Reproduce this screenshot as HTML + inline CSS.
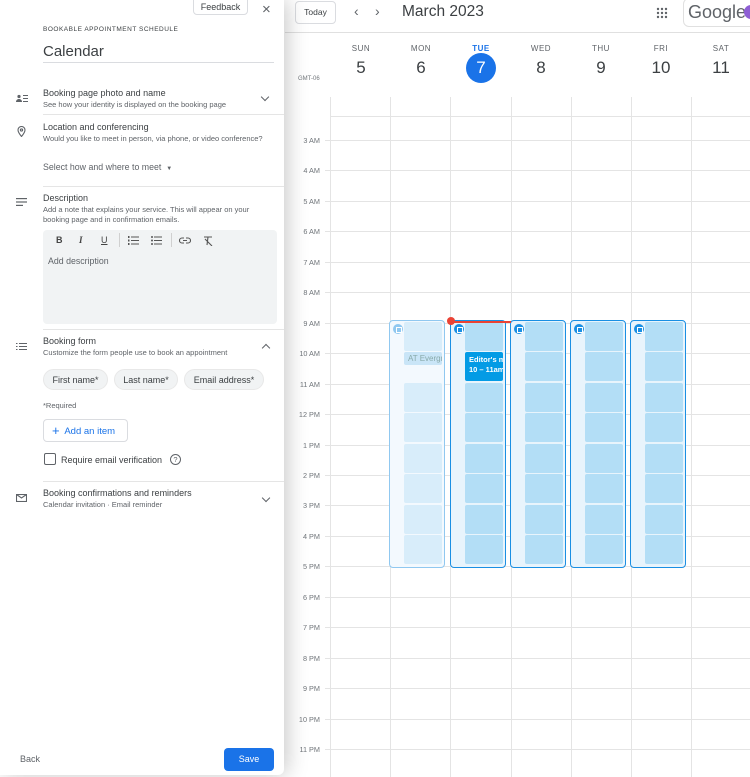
<!DOCTYPE html>
<html><head><meta charset="utf-8"><style>
*{box-sizing:border-box;margin:0;padding:0}
body{width:750px;height:777px;overflow:hidden;background:#fff;font-family:"Liberation Sans",Arial,sans-serif;position:relative;color:#3c4043}
.a{position:absolute}
.hl{position:absolute;left:325px;right:0;height:1px;background:#e4e4e4}
.vl{position:absolute;top:97px;bottom:0;width:1px;background:#e4e4e4}
.lb{position:absolute;left:288px;width:32px;text-align:right;font-size:7.3px;color:#70757a}
.dn{position:absolute;width:60px;text-align:center;font-size:8px;color:#5f6368;top:44px;letter-spacing:.5px}
.dd{position:absolute;width:60px;text-align:center;font-size:17px;color:#3c4043;top:58px}
.blk{position:absolute;top:320px;height:248px;width:56px;border:1.5px solid #1a8fe3;border-radius:4px;background:#e8f4fc}
.blk .ic{position:absolute;left:3px;top:3px;width:10px;height:10px;border-radius:50%;background:#1a8fe3}
.blk .ic:after{content:"";position:absolute;left:3px;top:3px;width:4px;height:4px;border:0.8px solid #fff}
.sl{position:absolute;left:14px;width:38px;height:29px;background:#b3def6;border-radius:2px}
.mon{border-color:#90c8f0;background:#f3f9fe}
.mon .sl{background:#d8edfa}
.mon .ic{background:#90c8f0}
.panel{position:absolute;left:0;top:0;width:284px;height:775px;background:#fff;box-shadow:3px 0 22px rgba(0,0,0,.22);border-radius:0 0 6px 0}
.t{font-size:9px;color:#3c4043}
.s{font-size:7.5px;color:#5f6368}
.sep{position:absolute;left:43px;right:0;height:1px;background:#e5e5e5}
.chip{position:absolute;top:369px;height:21px;border-radius:11px;background:#f1f3f4;font-size:9px;line-height:21px;text-align:center;color:#3c4043;border:1px solid #e8e8e8}
</style></head><body>
<div class="a" style="left:295px;top:1px;width:41px;height:23px;border:1px solid #dadce0;border-radius:4px;font-size:8.5px;line-height:21px;text-align:center">Today</div>
<div class="a" style="left:354px;top:3px;font-size:14px;color:#5f6368">&#8249;</div>
<div class="a" style="left:375px;top:3px;font-size:14px;color:#5f6368">&#8250;</div>
<div class="a" style="left:402px;top:3px;font-size:15.5px;color:#3c4043">March 2023</div>
<svg class="a" style="left:656px;top:7px" width="12" height="12" viewBox="0 0 12 12" fill="#5f6368"><circle cx="2" cy="2" r="1.2"/><circle cx="6" cy="2" r="1.2"/><circle cx="10" cy="2" r="1.2"/><circle cx="2" cy="6" r="1.2"/><circle cx="6" cy="6" r="1.2"/><circle cx="10" cy="6" r="1.2"/><circle cx="2" cy="10" r="1.2"/><circle cx="6" cy="10" r="1.2"/><circle cx="10" cy="10" r="1.2"/></svg>
<div class="a" style="left:683px;top:-2px;width:80px;height:29px;border:1px solid #e0e0e0;border-radius:6px"></div>
<div class="a" style="left:688px;top:2px;font-size:18px;color:#5f6368">Google</div>
<div class="a" style="left:744px;top:5px;width:14px;height:14px;border-radius:50%;background:#8e5fd4"></div>
<div class="a" style="left:285px;top:32px;width:465px;height:1px;background:#e0e0e0"></div>
<div class="dn" style="left:331px">SUN</div><div class="dd" style="left:331px">5</div>
<div class="dn" style="left:391px">MON</div><div class="dd" style="left:391px">6</div>
<div class="dn" style="left:451px;color:#1a73e8;font-weight:bold">TUE</div>
<div class="a" style="left:466px;top:53px;width:30px;height:30px;border-radius:50%;background:#1a73e8;color:#fff;font-size:17px;text-align:center;line-height:30px">7</div>
<div class="dn" style="left:511px">WED</div><div class="dd" style="left:511px">8</div>
<div class="dn" style="left:571px">THU</div><div class="dd" style="left:571px">9</div>
<div class="dn" style="left:631px">FRI</div><div class="dd" style="left:631px">10</div>
<div class="dn" style="left:691px">SAT</div><div class="dd" style="left:691px">11</div>
<div class="a" style="left:298px;top:76px;font-size:6px;color:#70757a">GMT-06</div>
<div class="hl" style="top:116px;left:330px"></div>
<div class="vl" style="left:330px"></div><div class="vl" style="left:390px"></div><div class="vl" style="left:450px"></div><div class="vl" style="left:511px"></div><div class="vl" style="left:571px"></div><div class="vl" style="left:631px"></div><div class="vl" style="left:691px"></div>
<div class="hl" style="top:140px"></div><div class="lb" style="top:136px">3 AM</div>
<div class="hl" style="top:170px"></div><div class="lb" style="top:166px">4 AM</div>
<div class="hl" style="top:201px"></div><div class="lb" style="top:197px">5 AM</div>
<div class="hl" style="top:231px"></div><div class="lb" style="top:227px">6 AM</div>
<div class="hl" style="top:262px"></div><div class="lb" style="top:258px">7 AM</div>
<div class="hl" style="top:292px"></div><div class="lb" style="top:288px">8 AM</div>
<div class="hl" style="top:323px"></div><div class="lb" style="top:319px">9 AM</div>
<div class="hl" style="top:353px"></div><div class="lb" style="top:349px">10 AM</div>
<div class="hl" style="top:384px"></div><div class="lb" style="top:380px">11 AM</div>
<div class="hl" style="top:414px"></div><div class="lb" style="top:410px">12 PM</div>
<div class="hl" style="top:445px"></div><div class="lb" style="top:441px">1 PM</div>
<div class="hl" style="top:475px"></div><div class="lb" style="top:471px">2 PM</div>
<div class="hl" style="top:505px"></div><div class="lb" style="top:501px">3 PM</div>
<div class="hl" style="top:536px"></div><div class="lb" style="top:532px">4 PM</div>
<div class="hl" style="top:566px"></div><div class="lb" style="top:562px">5 PM</div>
<div class="hl" style="top:597px"></div><div class="lb" style="top:593px">6 PM</div>
<div class="hl" style="top:627px"></div><div class="lb" style="top:623px">7 PM</div>
<div class="hl" style="top:658px"></div><div class="lb" style="top:654px">8 PM</div>
<div class="hl" style="top:688px"></div><div class="lb" style="top:684px">9 PM</div>
<div class="hl" style="top:719px"></div><div class="lb" style="top:715px">10 PM</div>
<div class="hl" style="top:749px"></div><div class="lb" style="top:745px">11 PM</div>

<div class="blk mon" style="left:389px"><div class="ic"></div>
<div class="sl" style="top:1px"></div><div class="sl" style="top:31px;height:13px;background:#c9e5f7;font-size:8px;color:#8aa;line-height:13px;padding-left:4px;overflow:hidden;white-space:nowrap">AT Evergr</div><div class="sl" style="top:62px"></div><div class="sl" style="top:92px"></div><div class="sl" style="top:123px"></div><div class="sl" style="top:153px"></div><div class="sl" style="top:184px"></div><div class="sl" style="top:214px"></div></div>
<div class="blk" style="left:450px"><div class="ic"></div>
<div class="sl" style="top:1px"></div><div class="sl" style="top:31px;background:#039be5;color:#fff;font-size:7.5px;font-weight:bold;padding:3px 0 0 4px;line-height:10px;overflow:hidden;white-space:nowrap">Editor's m<br>10 – 11am</div><div class="sl" style="top:62px"></div><div class="sl" style="top:92px"></div><div class="sl" style="top:123px"></div><div class="sl" style="top:153px"></div><div class="sl" style="top:184px"></div><div class="sl" style="top:214px"></div></div>
<div class="blk" style="left:510px"><div class="ic"></div>
<div class="sl" style="top:1px"></div><div class="sl" style="top:31px"></div><div class="sl" style="top:62px"></div><div class="sl" style="top:92px"></div><div class="sl" style="top:123px"></div><div class="sl" style="top:153px"></div><div class="sl" style="top:184px"></div><div class="sl" style="top:214px"></div></div>
<div class="blk" style="left:570px"><div class="ic"></div>
<div class="sl" style="top:1px"></div><div class="sl" style="top:31px"></div><div class="sl" style="top:62px"></div><div class="sl" style="top:92px"></div><div class="sl" style="top:123px"></div><div class="sl" style="top:153px"></div><div class="sl" style="top:184px"></div><div class="sl" style="top:214px"></div></div>
<div class="blk" style="left:630px"><div class="ic"></div>
<div class="sl" style="top:1px"></div><div class="sl" style="top:31px"></div><div class="sl" style="top:62px"></div><div class="sl" style="top:92px"></div><div class="sl" style="top:123px"></div><div class="sl" style="top:153px"></div><div class="sl" style="top:184px"></div><div class="sl" style="top:214px"></div></div>
<div class="a" style="left:451px;top:321px;width:60px;height:1.5px;background:#ea4335"></div>
<div class="a" style="left:447px;top:317px;width:8px;height:8px;border-radius:50%;background:#ea4335"></div>

<div class="panel">
<div class="a" style="left:193px;top:-4px;width:55px;height:19px;border:1px solid #dadce0;border-radius:4px;font-size:9px;text-align:center;line-height:18px;padding-top:1px">Feedback</div>
<div class="a" style="left:262px;top:1px;font-size:15px;color:#5f6368">×</div>
<div class="a" style="left:43px;top:26px;font-size:6.5px;letter-spacing:.5px;color:#3c4043">BOOKABLE APPOINTMENT SCHEDULE</div>
<div class="a" style="left:43px;top:43px;font-size:15px;color:#3c4043">Calendar</div>
<div class="a" style="left:43px;top:62px;width:231px;height:1px;background:#dadce0"></div>

<svg class="a" style="left:16px;top:94px" width="12" height="9" viewBox="0 0 12 9" fill="#5f6368"><circle cx="3" cy="2.5" r="1.6"/><path d="M0 8c0-2 1.5-3 3-3s3 1 3 3z"/><rect x="7" y="1" width="5" height="1"/><rect x="7" y="4" width="5" height="1"/><rect x="7" y="7" width="5" height="1"/></svg>
<div class="a t" style="left:43px;top:88px">Booking page photo and name</div>
<div class="a s" style="left:43px;top:100px">See how your identity is displayed on the booking page</div>
<div class="a" style="left:262px;top:94px;width:6px;height:6px;border-right:1.3px solid #5f6368;border-bottom:1.3px solid #5f6368;transform:rotate(45deg)"></div>
<div class="sep" style="top:114px"></div>

<svg class="a" style="left:17px;top:126px" width="9" height="11" viewBox="0 0 9 11" fill="none" stroke="#5f6368" stroke-width="1.1"><path d="M4.5 10.5C2 7.5 1 5.5 1 4a3.5 3.5 0 0 1 7 0c0 1.5-1 3.5-3.5 6.5z"/><circle cx="4.5" cy="4" r="1.1"/></svg>
<div class="a t" style="left:43px;top:122px">Location and conferencing</div>
<div class="a s" style="left:43px;top:134px">Would you like to meet in person, via phone, or video conference?</div>
<div class="a" style="left:43px;top:162px;font-size:8.8px;color:#5f6368">Select how and where to meet &nbsp;<span style="font-size:6px">▼</span></div>
<div class="sep" style="top:186px"></div>

<svg class="a" style="left:16px;top:198px" width="11" height="8" viewBox="0 0 11 8" fill="#5f6368"><rect y="0" width="11" height="1.2"/><rect y="3.4" width="11" height="1.2"/><rect y="6.8" width="7" height="1.2"/></svg>
<div class="a t" style="left:43px;top:193px">Description</div>
<div class="a s" style="left:43px;top:205px;line-height:10px">Add a note that explains your service. This will appear on your<br>booking page and in confirmation emails.</div>
<div class="a" style="left:43px;top:230px;width:234px;height:94px;background:#f1f3f4;border-radius:4px"></div>
<div class="a" style="left:56px;top:235px;font-size:9px;font-weight:bold;color:#444">B</div>
<div class="a" style="left:79px;top:235px;font-size:9px;font-style:italic;font-family:'Liberation Serif',serif;font-weight:bold;color:#444">I</div>
<div class="a" style="left:101px;top:235px;font-size:9px;text-decoration:underline;color:#444">U</div>
<div class="a" style="left:119px;top:233px;width:1px;height:14px;background:#d0d0d0"></div>
<svg class="a" style="left:128px;top:236px" width="11" height="9" viewBox="0 0 11 9" fill="#555"><rect x="3" y="0.5" width="8" height="1"/><rect x="3" y="4" width="8" height="1"/><rect x="3" y="7.5" width="8" height="1"/><rect x="0" y="0" width="1.5" height="2"/><rect x="0" y="3.5" width="1.5" height="2"/><rect x="0" y="7" width="1.5" height="2"/></svg>
<svg class="a" style="left:151px;top:236px" width="11" height="9" viewBox="0 0 11 9" fill="#555"><rect x="3" y="0.5" width="8" height="1"/><rect x="3" y="4" width="8" height="1"/><rect x="3" y="7.5" width="8" height="1"/><circle cx="1" cy="1" r="1"/><circle cx="1" cy="4.5" r="1"/><circle cx="1" cy="8" r="1"/></svg>
<div class="a" style="left:171px;top:233px;width:1px;height:14px;background:#d0d0d0"></div>
<svg class="a" style="left:179px;top:237px" width="12" height="7" viewBox="0 0 12 7" fill="none" stroke="#555" stroke-width="1.1"><path d="M5 1H3a2.5 2.5 0 0 0 0 5h2M7 1h2a2.5 2.5 0 0 1 0 5H7M4 3.5h4"/></svg>
<svg class="a" style="left:203px;top:236px" width="10" height="10" viewBox="0 0 10 10" fill="none" stroke="#555" stroke-width="1.1"><path d="M1 1h8M5 1L4 9M2 3l7 7"/></svg>
<div class="a" style="left:48px;top:256px;font-size:8.8px;color:#5f6368">Add description</div>
<div class="sep" style="top:329px"></div>

<svg class="a" style="left:16px;top:343px" width="11" height="7" viewBox="0 0 11 7" fill="#5f6368"><rect width="1.5" height="1"/><rect y="3" width="1.5" height="1"/><rect y="6" width="1.5" height="1"/><rect x="3" width="8" height="1"/><rect x="3" y="3" width="8" height="1"/><rect x="3" y="6" width="8" height="1"/></svg>
<div class="a t" style="left:43px;top:336px">Booking form</div>
<div class="a s" style="left:43px;top:348px">Customize the form people use to book an appointment</div>
<div class="a" style="left:263px;top:345px;width:6px;height:6px;border-left:1.3px solid #5f6368;border-top:1.3px solid #5f6368;transform:rotate(45deg)"></div>
<div class="chip" style="left:43px;width:65px">First name*</div>
<div class="chip" style="left:114px;width:64px">Last name*</div>
<div class="chip" style="left:184px;width:80px">Email address*</div>
<div class="a s" style="left:43px;top:401px;font-size:7.5px">*Required</div>
<div class="a" style="left:43px;top:419px;width:85px;height:23px;border:1px solid #dadce0;border-radius:4px;font-size:9.5px;color:#1a73e8;line-height:21px;padding-left:8px"><span style="font-size:13px;vertical-align:-1px">+</span>&nbsp; Add an item</div>
<div class="a" style="left:44px;top:453px;width:12px;height:12px;border:1.5px solid #5f6368;border-radius:2px"></div>
<div class="a" style="left:61px;top:455px;font-size:9px;color:#3c4043">Require email verification</div>
<div class="a" style="left:170px;top:454px;width:11px;height:11px;border:1.2px solid #5f6368;border-radius:50%;font-size:7.5px;text-align:center;line-height:9px;color:#5f6368">?</div>
<div class="sep" style="top:481px"></div>

<svg class="a" style="left:16px;top:494px" width="11" height="8" viewBox="0 0 11 8" fill="none" stroke="#5f6368" stroke-width="1.1"><rect x=".5" y=".5" width="10" height="7"/><path d="M.5 .5l5 3.5 5-3.5"/></svg>
<div class="a t" style="left:43px;top:488px">Booking confirmations and reminders</div>
<div class="a s" style="left:43px;top:500px">Calendar invitation · Email reminder</div>
<div class="a" style="left:263px;top:495px;width:6px;height:6px;border-right:1.3px solid #5f6368;border-bottom:1.3px solid #5f6368;transform:rotate(45deg)"></div>

<div class="a" style="left:20px;top:754px;font-size:9px;color:#5f6368">Back</div>
<div class="a" style="left:224px;top:748px;width:50px;height:23px;background:#1a73e8;border-radius:4px;color:#fff;font-size:9px;text-align:center;line-height:23px">Save</div>
</div>
</body></html>
